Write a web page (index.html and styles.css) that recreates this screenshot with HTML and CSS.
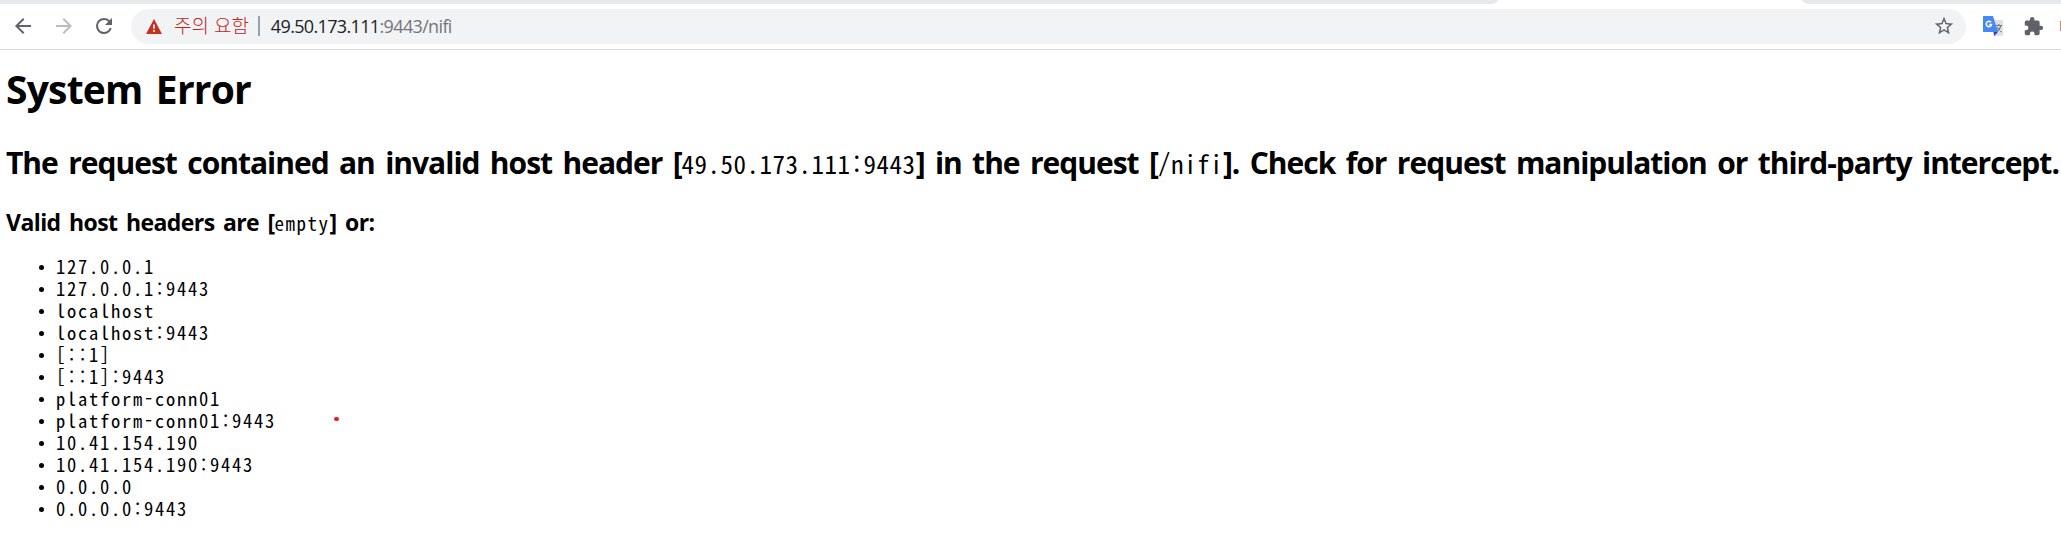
FILE: index.html
```html
<!DOCTYPE html>
<html lang="ko">
<head>
<meta charset="utf-8">
<title>System Error</title>
<link rel="stylesheet" href="styles.css">
</head>
<body>
<header class="browser">
  <div class="tabs"><span class="tab left"></span><span class="tab right"></span></div>
  <div class="toolbar">
    <svg class="nav back" viewBox="0 0 24 24"><path d="M20 11H7.83l5.59-5.59L12 4l-8 8 8 8 1.41-1.41L7.83 13H20v-2z"/></svg>
    <svg class="nav forward" viewBox="0 0 24 24"><path d="M12 4l-1.41 1.41L16.17 11H4v2h12.17l-5.58 5.59L12 20l8-8z"/></svg>
    <svg class="nav reload" viewBox="0 0 24 24"><path d="M17.65 6.35A7.96 7.96 0 0 0 12 4a8 8 0 1 0 7.73 10h-2.08A6 6 0 1 1 12 6c1.66 0 3.14.69 4.22 1.78L13 11h7V4l-2.35 2.35z"/></svg>
    <div class="omnibox">
      <svg class="warn" viewBox="0 0 16 15"><path fill="#c5301f" d="M8 0l8 15H0z"/><path fill="#f1f3f4" d="M7.1 5.5h1.8v4.2H7.1zM7.1 10.9h1.8v1.8H7.1z"/></svg>
      <span class="notice">주의 요함</span><span class="divider"></span>
      <span class="url"><span class="host">49.50.173.111</span>:9443/nifi</span>
      <svg class="star" viewBox="0 0 24 24"><path d="M22 9.24l-7.19-.62L12 2 9.19 8.63 2 9.24l5.46 4.73L5.82 21 12 17.27 18.18 21l-1.63-7.03L22 9.24zM12 15.4l-3.76 2.27 1-4.28-3.32-2.88 4.38-.38L12 6.1l1.71 4.04 4.38.38-3.32 2.88 1 4.28L12 15.4z"/></svg>
    </div>
    <svg class="translate" viewBox="0 0 20 20"><path fill="#dfe1e3" d="M7 4h12.2q.8 0 .8.8v14.4q0 .8-.8.8H11z"/><path fill="none" stroke="#607d84" stroke-width="1.1" d="M12.5 9.5H19M15.7 8v1.5M18 9.5q-1 4-4.5 6.5M14 11q1.5 3.5 4.5 5"/><path fill="#2a3fc0" d="M10.5 16H15l-3.8 4z"/><path fill="#4688f4" d="M.8 0H10l5 16H.8Q0 16 0 15.2V.8Q0 0 .8 0z"/><path fill="none" stroke="#fff" stroke-width="1.5" d="M8 6.3A2.7 2.7 0 1 0 8.6 8.4H6"/></svg>
    <svg class="puzzle" viewBox="0 0 24 24"><path d="M20.5 11H19V7a2 2 0 0 0-2-2h-4V3.5a2.5 2.5 0 0 0-5 0V5H4a2 2 0 0 0-2 2v3.8h1.5a2.7 2.7 0 0 1 0 5.4H2V20a2 2 0 0 0 2 2h3.8v-1.5a2.7 2.7 0 0 1 5.4 0V22H17a2 2 0 0 0 2-2v-4h1.5a2.5 2.5 0 0 0 0-5z"/></svg>
    <span class="avatar"></span>
  </div>
</header>
<main class="page">
  <h1>System Error</h1>
  <h2>The request contained an invalid host header [<code>49.50.173.111:9443</code>] in the request [<code>/nifi</code>]. Check for request manipulation or third-party intercept.</h2>
  <h3>Valid host headers are [<code>empty</code>] or:</h3>
  <ul>
    <li>127.0.0.1</li>
    <li>127.0.0.1:9443</li>
    <li>localhost</li>
    <li>localhost:9443</li>
    <li>[::1]</li>
    <li>[::1]:9443</li>
    <li>platform-conn01</li>
    <li>platform-conn01:9443</li>
    <li>10.41.154.190</li>
    <li>10.41.154.190:9443</li>
    <li>0.0.0.0</li>
    <li>0.0.0.0:9443</li>
  </ul>
  <span class="dot"></span>
</main>
</body>
</html>
```
FILE: styles.css
```css
body { margin: 0; background: #fff; color: #000; height: 557px; overflow: hidden; }
.browser { font-family: "Open Sans", "Noto Sans CJK KR", sans-serif; }
.tabs { height: 4px; display: flex; justify-content: space-between; }
.tab { background: #e6e9ec; }
.tab.left { width: 1498px; border-bottom-right-radius: 8px 4px; }
.tab.right { width: 259px; border-bottom-left-radius: 8px 4px; }
.toolbar { height: 45px; border-bottom: 1px solid #d9dbdd; display: flex; align-items: center; padding-bottom: 1px; box-sizing: border-box; height: 46px; }
.nav { width: 24px; height: 24px; fill: #5f6368; flex: none; }
.back { margin-left: 11px; }
.forward { margin-left: 17px; fill: #bbbdbf; }
.reload { margin-left: 16px; }
.omnibox { margin-left: 15px; width: 1835px; height: 35px; border-radius: 18px; background: #f1f3f4; display: flex; align-items: center; flex: none; }
.warn { width: 16px; height: 15px; margin-left: 15px; }
.notice { margin-left: 12px; font-size: 19px; color: #c5221f; font-weight: 300; white-space: nowrap; position: relative; top: -1px; }
.divider { width: 2px; height: 20px; background: #9aa0a6; margin: 0 11px 0 9px; }
.url { font-size: 18px; letter-spacing: -0.650px; color: #72767a; }
.host { color: #202124; }
.star { width: 22px; height: 22px; margin-left: auto; margin-right: 11px; fill: #5f6368; }
.translate { width: 20px; height: 20px; margin-left: 17px; flex: none; }
.puzzle { width: 21px; height: 21px; margin-left: 20px; fill: #5f6368; flex: none; }
.avatar { width: 1px; height: 10px; margin-left: 16px; background: #db8475; }
.page { padding: 0 0 0 6px; font-family: "Open Sans", "Noto Sans", sans-serif; }
h1, h2, h3 { margin: 0; white-space: pre; font-weight: 700; }
h1 { font-size: 39px; line-height: 52px; margin-top: 13px; word-spacing: 4px; letter-spacing: -0.800px; }
h2 { font-size: 30px; line-height: 40px; margin-top: 28px; word-spacing: 3.550px; letter-spacing: -1px; }
h3 { font-size: 23px; line-height: 30px; margin-top: 24px; word-spacing: 3px; letter-spacing: -0.570px; }
code, li { font-family: "Noto Sans CJK KR", monospace; font-feature-settings: "hwid"; font-weight: 400; line-height: 1; }
h2 code { font-size: 25px; letter-spacing: 0.500px; }
h3 code { font-size: 19px; letter-spacing: 1.500px; }
ul { margin: 18px 0 0; padding: 0 0 0 33px; list-style: none; }
li { display: flex; align-items: center; font-size: 18.500px; line-height: 22px; letter-spacing: 1.750px; }
li::before { content: ""; width: 5px; height: 5px; border-radius: 50%; background: #000; margin: 3px 12px 0 0; }
.dot { position: absolute; left: 334px; top: 417px; width: 5px; height: 4px; border-radius: 2px; background: #ed1c24; }
```
